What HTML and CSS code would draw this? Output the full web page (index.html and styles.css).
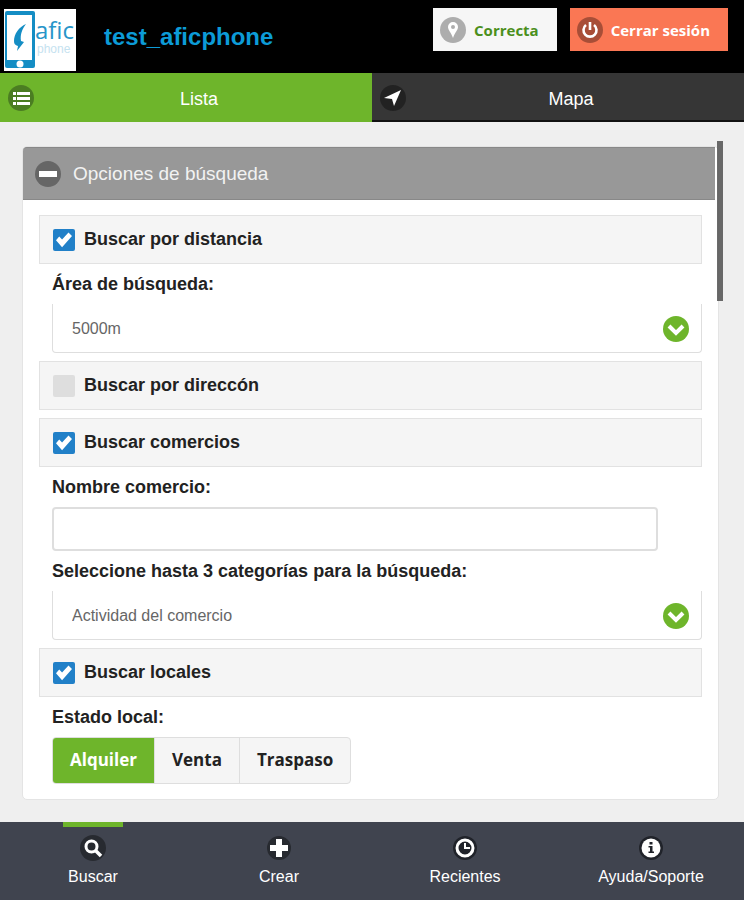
FILE: index.html
```html
<!DOCTYPE html>
<html lang="es">
<head>
    <meta charset="UTF-8">
    <meta name="viewport" content="width=device-width, initial-scale=1.0">
    <title>aficphone</title>
    <link rel="stylesheet" href="styles.css">
</head>
<body>

    <!-- Header -->
    <header class="header">
        <svg class="logo" viewBox="0 0 72 62" role="img" aria-label="afic phone">
            <rect width="72" height="62" fill="#fff"/>
            <rect x="1" y="2" width="30" height="57" rx="2" fill="#148dc4"/>
            <rect x="3" y="6" width="25" height="45" fill="#fff"/>
            <circle cx="16" cy="55" r="3.5" fill="#fff"/>
            <path d="M22 15C15 18 10 25 10 32c0 3 1 4 4 5l-1 5 7-9-3-1c-1-6 1-12 5-17z" fill="#148dc4"/>
            <text class="logo-afic" x="31" y="30">afic</text>
            <text class="logo-phone" x="33" y="44">phone</text>
        </svg>
        <h1>test_aficphone</h1>
        <div class="header-actions">
            <button type="button" class="btn btn-ok">
                <svg class="icon" viewBox="0 0 26 26"><circle cx="13" cy="13" r="13" fill="#adadad"/><path d="M13 5a5 5 0 0 0-5 5c0 3 3 5 5 11 2-6 5-8 5-11a5 5 0 0 0-5-5zm0 3a2 2 0 1 1 0 4 2 2 0 0 1 0-4z" fill="#fff" fill-rule="evenodd"/></svg>
                Correcta
            </button>
            <button type="button" class="btn btn-exit">
                <svg class="icon" viewBox="0 0 26 26"><circle cx="13" cy="13" r="13" fill="#a84e37"/><path d="M9 8a6.5 6.5 0 1 0 8 0M13 5v8" fill="none" stroke="#fff" stroke-width="2.6"/></svg>
                Cerrar sesión
            </button>
        </div>
    </header>

    <!-- Tabs -->
    <nav class="tabs">
        <a href="#lista" class="tab active">
            <svg class="icon" viewBox="0 0 26 26"><circle cx="13" cy="13" r="13" fill="#4b7d22"/><path d="M5 7h3v3H5zM5 12h3v3H5zM5 17h3v3H5zM9 7h13v3H9zM9 12h13v3H9zM9 17h13v3H9z" fill="#fff"/></svg>
            <span>Lista</span>
        </a>
        <a href="#mapa" class="tab">
            <svg class="icon" viewBox="0 0 26 26"><circle cx="13" cy="13" r="13" fill="#222"/><path d="M21 5L4 13l8 1 2 7z" fill="#fff"/></svg>
            <span>Mapa</span>
        </a>
    </nav>

    <!-- Search options -->
    <main>
        <form class="panel">
            <button type="button" class="panel-title">
                <svg class="icon" viewBox="0 0 26 26"><circle cx="13" cy="13" r="13" fill="#666"/><path d="M4 10h18v6H4z" fill="#fff"/></svg>
                Opciones de búsqueda
            </button>
            <div class="panel-body">
                <label class="check"><input type="checkbox" checked>Buscar por distancia</label>

                <div class="field">
                    <label for="area">Área de búsqueda:</label>
                    <div class="select">
                        <select id="area"><option>5000m</option></select>
                        <svg class="chevron" viewBox="0 0 26 26"><circle cx="13" cy="13" r="13" fill="#6eb52b"/><path d="M6 10l7 7 7-7" fill="none" stroke="#fff" stroke-width="4"/></svg>
                    </div>
                </div>

                <label class="check"><input type="checkbox">Buscar por direccón</label>
                <label class="check"><input type="checkbox" checked>Buscar comercios</label>

                <div class="field">
                    <label for="nombre">Nombre comercio:</label>
                    <input type="text" id="nombre" class="text">
                    <label for="actividad">Seleccione hasta 3 categorías para la búsqueda:</label>
                    <div class="select">
                        <select id="actividad"><option>Actividad del comercio</option></select>
                        <svg class="chevron" viewBox="0 0 26 26"><circle cx="13" cy="13" r="13" fill="#6eb52b"/><path d="M6 10l7 7 7-7" fill="none" stroke="#fff" stroke-width="4"/></svg>
                    </div>
                </div>

                <label class="check"><input type="checkbox" checked>Buscar locales</label>

                <div class="field">
                    <p id="estado">Estado local:</p>
                    <div class="segmented" role="group" aria-labelledby="estado">
                        <button type="button" class="active" aria-pressed="true">Alquiler</button>
                        <button type="button" aria-pressed="false">Venta</button>
                        <button type="button" aria-pressed="false">Traspaso</button>
                    </div>
                </div>
            </div>
            <div class="scrollbar"></div>
        </form>
    </main>

    <!-- Bottom navigation -->
    <footer>
        <nav class="bottom-nav">
            <a href="#buscar" class="active">
                <svg class="icon" viewBox="0 0 26 26"><circle cx="13" cy="13" r="13" fill="#272a30"/><circle cx="11.500" cy="11.500" r="5.500" fill="none" stroke="#fff" stroke-width="3"/><path d="M15 15l6 6" stroke="#fff" stroke-width="3.500"/></svg>
                Buscar
            </a>
            <a href="#crear">
                <svg class="icon" viewBox="0 0 26 26"><circle cx="13" cy="13" r="12" fill="#272a30"/><path d="M10 4h6v6h6v6h-6v6h-6v-6H4v-6h6z" fill="#fff"/></svg>
                Crear
            </a>
            <a href="#recientes">
                <svg class="icon" viewBox="0 0 26 26"><circle cx="13" cy="13" r="12" fill="#20232a"/><circle cx="13" cy="13" r="8" fill="none" stroke="#fff" stroke-width="3"/><path d="M13 8v5h5" fill="none" stroke="#fff" stroke-width="2"/></svg>
                Recientes
            </a>
            <a href="#ayuda">
                <svg class="icon" viewBox="0 0 26 26"><circle cx="13" cy="13" r="12" fill="#20232a"/><circle cx="13" cy="13" r="9.500" fill="#fff"/><path d="M11.500 7h3v2.500h-3zM10.500 11h4v5.500h1.500V18h-5.500v-1.500h1.500v-4h-1.500z" fill="#20232a"/></svg>
                Ayuda/Soporte
            </a>
        </nav>
    </footer>

</body>
</html>
```
FILE: styles.css
```css
/* Global Styles */
* {
    margin: 0;
    padding: 0;
    box-sizing: border-box;
}
body {
    min-height: 100vh;
    display: flex;
    flex-direction: column;
    font-family: 'Liberation Sans', Arial, sans-serif;
    font-size: 18px;
    background: #efefef;
    color: #222;
}
a {
    text-decoration: none;
    color: inherit;
}
button, input, select {
    font: inherit;
    color: inherit;
    border: none;
    background: none;
}
.icon {
    width: 26px;
    height: 26px;
    flex: none;
}

/* Header */
.header {
    display: flex;
    align-items: flex-start;
    height: 73px;
    padding: 8px 16px 0 4px;
    background: #000;
}
.logo {
    width: 72px;
    height: 62px;
    margin-top: 1px;
}
.logo-afic {
    font: 24px 'Open Sans', sans-serif;
    fill: #2795c9;
}
.logo-phone {
    font: 12px 'Liberation Sans', sans-serif;
    fill: #c5e2f0;
}
.header h1 {
    margin-left: 28px;
    font-size: 24px;
    line-height: 58px;
    color: #0c9bd7;
}
.header-actions {
    display: flex;
    gap: 13px;
    margin-left: auto;
}
.btn {
    display: flex;
    align-items: center;
    gap: 8px;
    height: 43px;
    padding: 0 18px 0 7px;
    font-family: 'Open Sans', sans-serif;
    font-size: 15px;
    font-weight: bold;
}
.btn-ok {
    background: #f6f6f6;
    color: #4b8f1c;
}
.btn-exit {
    background: #fa7754;
    color: #fff;
}

/* Tabs */
.tabs {
    display: flex;
    height: 49px;
}
.tab {
    flex: 1;
    display: flex;
    align-items: center;
    padding: 2px 8px 0;
    background: #363636;
    border-bottom: 2px solid #111;
    color: #fff;
}
.tab span {
    flex: 1;
    line-height: 24px;
    padding-top: 2px;
    text-align: center;
}
.tab.active {
    background: #6eb52b;
    border-color: #6eb52b;
}

/* Search panel */
main {
    flex: 1;
    padding: 24px 25px 22px 22px;
}
.panel {
    position: relative;
    background: #fff;
    border: 1px solid #e4e4e4;
    border-radius: 5px;
}
.panel-title {
    display: flex;
    align-items: center;
    gap: 12px;
    width: calc(100% - 3px);
    height: 53px;
    padding: 0 12px;
    background: #989898;
    border-top: 1px solid #888;
    border-bottom: 1px solid #888;
    border-radius: 4px 0 0 0;
    font-size: 19px;
    color: #f2f2f2;
}
.panel-body {
    padding: 15px 16px;
}
.check {
    display: flex;
    align-items: center;
    gap: 9px;
    height: 49px;
    padding: 0 13px;
    background: #f5f5f5;
    border: 1px solid #e2e2e2;
    font-weight: bold;
}
.select {
    margin-bottom: 8px;
}
.check + .check {
    margin-top: 8px;
}
.check input {
    position: relative;
    width: 22px;
    height: 22px;
    appearance: none;
    background: #dedede;
    border-radius: 2px;
}
.check input:checked {
    background: #2180c8;
}
.check input:checked::after {
    content: '';
    position: absolute;
    inset: 3px;
    background: #fff;
    clip-path: polygon(0 54%, 20% 32%, 38% 50%, 78% 6%, 100% 28%, 38% 98%);
}
.field {
    padding-left: 13px;
}
.field label, .field p {
    display: block;
    line-height: 40px;
    font-weight: bold;
}
.select {
    position: relative;
}
.select select {
    display: block;
    width: 100%;
    height: 49px;
    padding: 0 60px 0 19px;
    appearance: none;
    background: #fff;
    border: 1px solid #dedede;
    border-top: none;
    border-radius: 0 0 4px 4px;
    font-size: 16px;
    color: #666;
}
.chevron {
    position: absolute;
    right: 13px;
    top: 12px;
    width: 26px;
    height: 26px;
    pointer-events: none;
}
.text {
    display: block;
    width: calc(100% - 44px);
    height: 44px;
    padding: 0 12px;
    background: #fff;
    border: 2px solid #dedede;
    border-radius: 4px;
}
.segmented {
    display: inline-flex;
    vertical-align: top;
    height: 47px;
    border: 1px solid #dedede;
    border-radius: 4px;
    background: #f5f5f5;
    overflow: hidden;
}
.segmented button {
    padding: 0 17px 2px;
    font-family: 'Open Sans', sans-serif;
    font-size: 17px;
    font-weight: bold;
}
.segmented button + button {
    border-left: 1px solid #dedede;
}
.segmented .active {
    background: #6eb52b;
    color: #fff;
}
.scrollbar {
    position: absolute;
    top: -6px;
    right: -5px;
    width: 6px;
    height: 160px;
    background: rgba(70, 70, 70, 0.8);
}

/* Bottom navigation */
.bottom-nav {
    display: flex;
    height: 78px;
    background: #40444f;
}
.bottom-nav a {
    position: relative;
    flex: 1;
    display: flex;
    flex-direction: column;
    align-items: center;
    gap: 4px;
    padding-top: 13px;
    font-size: 16px;
    line-height: 24px;
    color: #fff;
}
.bottom-nav .active::before {
    content: '';
    position: absolute;
    top: 0;
    width: 60px;
    height: 5px;
    background: #6eb52b;
}
```
